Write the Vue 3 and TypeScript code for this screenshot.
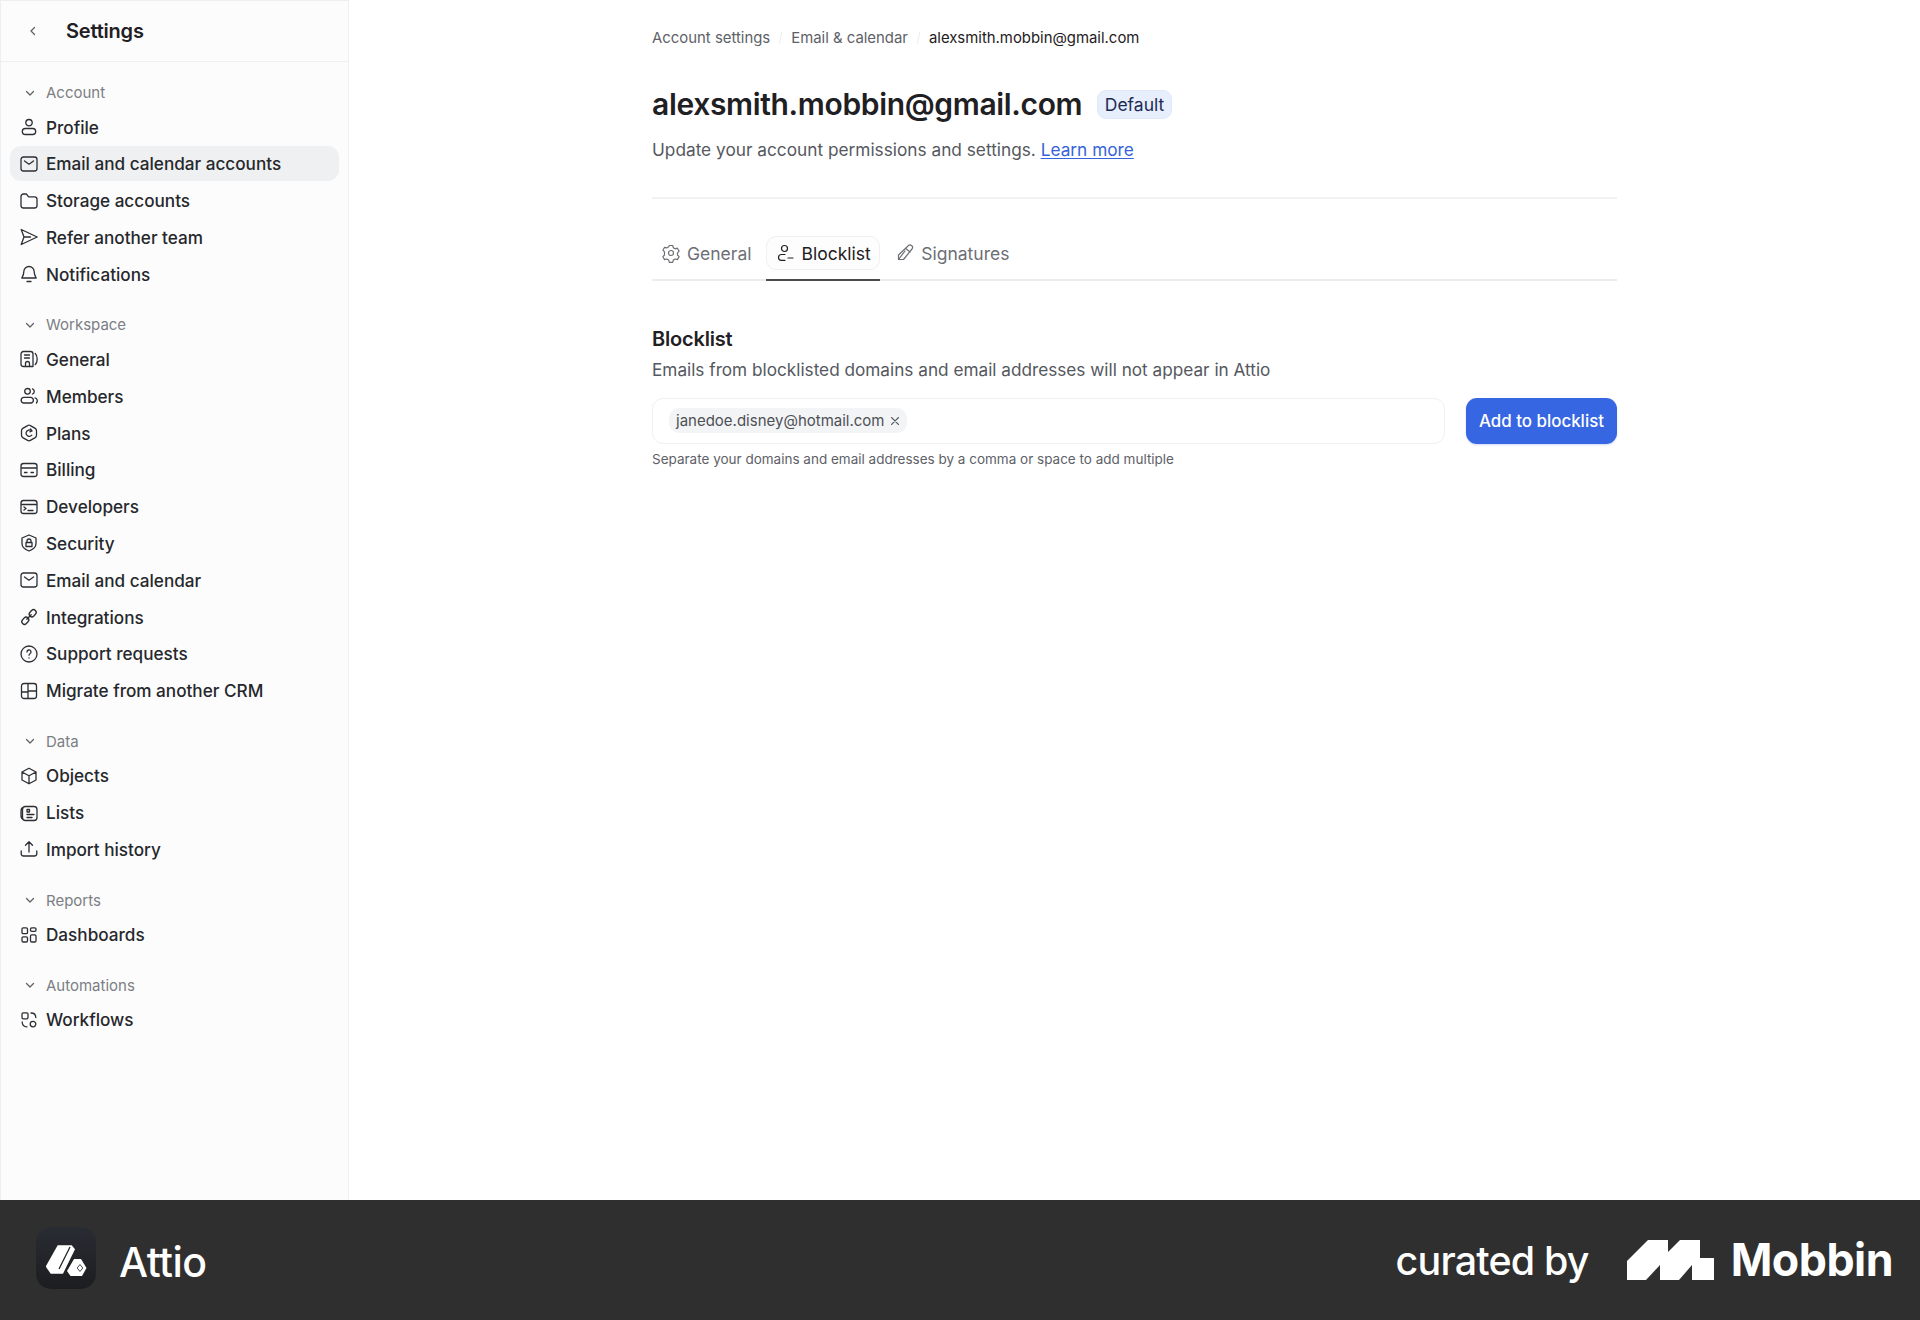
<script setup lang="ts">
interface NavItem {
  label: string;
  icon: string;
  active?: boolean;
}

interface NavSection {
  title: string;
  items: NavItem[];
}

// stroke paths on a 20x20 box
const icons: Record<string, string> = {
  user: 'M10 2.5a3.2 3.2 0 1 1 0 6.4 3.2 3.2 0 0 1 0-6.4ZM6.3 11.5h7.4a2.9 2.9 0 0 1 0 6H6.3a2.9 2.9 0 0 1 0-6Z',
  mail: 'M4.5 3h11A2.5 2.5 0 0 1 18 5.5v9a2.5 2.5 0 0 1-2.5 2.5h-11A2.5 2.5 0 0 1 2 14.5v-9A2.5 2.5 0 0 1 4.5 3ZM5.5 7l4.5 3.2L14.5 7',
  folder: 'M2 5.5A2.5 2.5 0 0 1 4.5 3h2.8l2.4 2.8h5.8A2.5 2.5 0 0 1 18 8.3v6.2a2.5 2.5 0 0 1-2.5 2.5h-11A2.5 2.5 0 0 1 2 14.5Z',
  send: 'M2.2 2.5 18.2 10 2.2 17.5 5 10ZM5 10h6.5',
  bell: 'M10 2.5a5.2 5.2 0 0 1 5.2 5.2c0 3.3 1.3 4.8 2 6.3H2.8c.7-1.5 2-3 2-6.3A5.2 5.2 0 0 1 10 2.5ZM8 17.5h4',
  general: 'M4.5 2.5h7A2.5 2.5 0 0 1 14 5v12.5H4.5A2.5 2.5 0 0 1 2 15V5a2.5 2.5 0 0 1 2.5-2.5ZM5.5 6h5M5.5 9h5M6.5 17.5v-3a2 2 0 0 1 4 0v3M16.2 4.5c1.5 1.2 2 3.4 2 5.5s-.5 4.3-2 5.5',
  users: 'M8.5 2.5a2.8 2.8 0 1 1 0 5.6 2.8 2.8 0 0 1 0-5.6ZM4.5 11.3H12a2.9 2.9 0 0 1 0 5.7H4.5a2.9 2.9 0 0 1 0-5.7ZM13.5 2.8a2.8 2.8 0 0 1 0 5.2M16 11.8c2.4.6 3 3.3 1.5 5.2',
  plans: 'M10 2.2c.5 0 1 .1 1.4.4l4.8 2.8c.8.5 1.3 1.3 1.3 2.3v4.6c0 1-.5 1.8-1.3 2.3l-4.8 2.8c-.9.5-1.9.5-2.8 0l-4.8-2.8c-.8-.5-1.3-1.3-1.3-2.3V7.7c0-1 .5-1.8 1.3-2.3l4.8-2.8c.4-.3.9-.4 1.4-.4ZM13 8A3.5 3.5 0 0 0 7 10a3.3 3.3 0 0 0 5.8 2.2M11.5 6l1.5 2-2.2.8',
  card: 'M4.5 3.5h11A2.5 2.5 0 0 1 18 6v8a2.5 2.5 0 0 1-2.5 2.5h-11A2.5 2.5 0 0 1 2 14V6a2.5 2.5 0 0 1 2.5-2.5ZM2 8h16M5.5 12.5H8M12 12.5h2.5',
  dev: 'M4.5 3.5h11A2.5 2.5 0 0 1 18 6v8a2.5 2.5 0 0 1-2.5 2.5h-11A2.5 2.5 0 0 1 2 14V6a2.5 2.5 0 0 1 2.5-2.5ZM2 7.5h16M5 10l2 1.5L5 13M9 13.5h5',
  shield: 'M10 2l7 3v5.5c0 3.5-3 6-7 7.5-4-1.5-7-4-7-7.5V5ZM7 9.5h6v4H7ZM8 9.5V8a2 2 0 0 1 4 0v1.5',
  link: 'M11 5.2l1.6-1.7a2.7 2.7 0 0 1 3.8 0 2.7 2.7 0 0 1 0 3.8L14.8 9A2.7 2.7 0 0 1 11 9a2.7 2.7 0 0 1 0-3.8ZM3.6 12.7 5.2 11A2.7 2.7 0 0 1 9 11a2.7 2.7 0 0 1 0 3.8l-1.6 1.7a2.7 2.7 0 0 1-3.8 0 2.7 2.7 0 0 1 0-3.8ZM7.8 12.2l4.4-4.4',
  help: 'M10 2a8 8 0 1 1 0 16 8 8 0 0 1 0-16ZM8 8a2 2 0 1 1 3 1.7c-.7.4-1 .8-1 1.5M10 13.8v.2',
  grid: 'M5 2.5h10A2.5 2.5 0 0 1 17.5 5v10a2.5 2.5 0 0 1-2.5 2.5H5A2.5 2.5 0 0 1 2.5 15V5A2.5 2.5 0 0 1 5 2.5ZM9 2.5v15M9 10h8.5M2.5 11H9',
  cube: 'M10 2.2l7 3.8v8l-7 3.8L3 14V6ZM3 6l7 3.8L17 6M10 9.8v8',
  lists: 'M6.5 3.5H15a3 3 0 0 1 3 3v8a3 3 0 0 1-3 3H6.5a3 3 0 0 1-3-3v-8a3 3 0 0 1 3-3ZM5.5 3.8C3.2 4 2 5.5 2 8v4.5c0 2 .8 3.5 2.5 4.3M8 6.5h2.5V9H8ZM8 11.5h7M8 14.5h5',
  upload: 'M10 13V2.8M6.5 6.3 10 2.8l3.5 3.5M2.2 12v2.5A2.5 2.5 0 0 0 4.7 17h10.6a2.5 2.5 0 0 0 2.5-2.5V12',
  dashboards: 'M4.3 2.8h2.9a1.3 1.3 0 0 1 1.3 1.3v3.3a1.3 1.3 0 0 1-1.3 1.3H4.3A1.3 1.3 0 0 1 3 7.4V4.1a1.3 1.3 0 0 1 1.3-1.3ZM12.8 2.8h2.9A1.3 1.3 0 0 1 17 4.1v1a1.3 1.3 0 0 1-1.3 1.3h-2.9a1.3 1.3 0 0 1-1.3-1.3v-1a1.3 1.3 0 0 1 1.3-1.3ZM12.8 9.8h2.9a1.3 1.3 0 0 1 1.3 1.3v4.6a1.3 1.3 0 0 1-1.3 1.3h-2.9a1.3 1.3 0 0 1-1.3-1.3v-4.6a1.3 1.3 0 0 1 1.3-1.3ZM4.3 11.8h2.9a1.3 1.3 0 0 1 1.3 1.3v2.6A1.3 1.3 0 0 1 7.2 17H4.3A1.3 1.3 0 0 1 3 15.7v-2.6a1.3 1.3 0 0 1 1.3-1.3Z',
  workflows: 'M4.3 2.8h3.4A1.3 1.3 0 0 1 9 4.1v3.4a1.3 1.3 0 0 1-1.3 1.3H4.3A1.3 1.3 0 0 1 3 7.5V4.1a1.3 1.3 0 0 1 1.3-1.3ZM12 3c3 0 4.8 1.5 4.8 4.5M3.2 12c0 3 1.5 4.8 4.8 4.8M14 11.3a2.8 2.8 0 1 1 0 5.6 2.8 2.8 0 0 1 0-5.6Z',
  gear: 'M8.3 2.5h3.4l.6 2.2 1.9 1.1 2.2-.6 1.7 2.9-1.6 1.7v2.2l1.6 1.7-1.7 2.9-2.2-.6-1.9 1.1-.6 2.2H8.3l-.6-2.2-1.9-1.1-2.2.6-1.7-2.9 1.6-1.7V8.9L1.9 7.2l1.7-2.9 2.2.6 1.9-1.1ZM10 7.5a2.5 2.5 0 1 1 0 5 2.5 2.5 0 0 1 0-5Z',
  block: 'M9.5 2.5a3 3 0 1 1 0 6 3 3 0 0 1 0-6ZM10 11.5H6.5a3 3 0 0 0-3 3c0 1.5 1 2.8 2.8 2.8H10M13 15h5',
  pen: 'M13 3a2.5 2.5 0 0 1 4 3l-8.500 10.500h-5V12ZM10.800 5.500 15 9M3.500 16.500 10 8',
};

const sections: NavSection[] = [
  {
    title: 'Account',
    items: [
      { label: 'Profile', icon: 'user' },
      { label: 'Email and calendar accounts', icon: 'mail', active: true },
      { label: 'Storage accounts', icon: 'folder' },
      { label: 'Refer another team', icon: 'send' },
      { label: 'Notifications', icon: 'bell' },
    ],
  },
  {
    title: 'Workspace',
    items: [
      { label: 'General', icon: 'general' },
      { label: 'Members', icon: 'users' },
      { label: 'Plans', icon: 'plans' },
      { label: 'Billing', icon: 'card' },
      { label: 'Developers', icon: 'dev' },
      { label: 'Security', icon: 'shield' },
      { label: 'Email and calendar', icon: 'mail' },
      { label: 'Integrations', icon: 'link' },
      { label: 'Support requests', icon: 'help' },
      { label: 'Migrate from another CRM', icon: 'grid' },
    ],
  },
  {
    title: 'Data',
    items: [
      { label: 'Objects', icon: 'cube' },
      { label: 'Lists', icon: 'lists' },
      { label: 'Import history', icon: 'upload' },
    ],
  },
  {
    title: 'Reports',
    items: [{ label: 'Dashboards', icon: 'dashboards' }],
  },
  {
    title: 'Automations',
    items: [{ label: 'Workflows', icon: 'workflows' }],
  },
];

const tabs = [
  { label: 'General', icon: 'gear' },
  { label: 'Blocklist', icon: 'block', active: true },
  { label: 'Signatures', icon: 'pen' },
];
</script>

<template>
  <div class="page">
    <div class="shell">
      <aside class="sidebar">
        <header class="side-head">
          <svg class="back" viewBox="0 0 12 12" width="12" height="12">
            <path d="M7.5 2.5 4 6l3.5 3.5" />
          </svg>
          <span class="side-title">Settings</span>
        </header>
        <nav class="nav">
          <section v-for="section in sections" :key="section.title" class="nav-section">
            <div class="section-title">
              <svg class="caret" viewBox="0 0 12 12" width="12" height="12">
                <path d="M2.5 4.5 6 8l3.5-3.5" />
              </svg>
              <span>{{ section.title }}</span>
            </div>
            <a
              v-for="item in section.items"
              :key="item.label"
              class="nav-item"
              :class="{ active: item.active }"
            >
              <svg class="nav-icon" viewBox="0 0 20 20" width="20" height="20">
                <path :d="icons[item.icon]" />
              </svg>
              <span>{{ item.label }}</span>
            </a>
          </section>
        </nav>
      </aside>

      <main class="main">
        <div class="content">
          <div class="crumbs">
            <span>Account settings</span>
            <i class="slash"></i>
            <span>Email &amp; calendar</span>
            <i class="slash"></i>
            <span class="current">alexsmith.mobbin@gmail.com</span>
          </div>

          <div class="title-row">
            <h1>alexsmith.mobbin@gmail.com</h1>
            <span class="badge">Default</span>
          </div>
          <p class="lead">
            Update your account permissions and settings.
            <a class="learn">Learn more</a>
          </p>
          <hr class="rule" />

          <div class="tabs">
            <div v-for="tab in tabs" :key="tab.label" class="tab" :class="{ active: tab.active }">
              <span class="tab-inner">
                <svg class="tab-icon" viewBox="0 0 20 20" width="20" height="20">
                  <path :d="icons[tab.icon]" />
                </svg>
                {{ tab.label }}
              </span>
            </div>
          </div>

          <h2>Blocklist</h2>
          <p class="desc">Emails from blocklisted domains and email addresses will not appear in Attio</p>
          <div class="form-row">
            <div class="field">
              <span class="chip">
                janedoe.disney@hotmail.com
                <svg viewBox="0 0 10 10" width="10" height="10">
                  <path d="M1.5 1.5l7 7M8.5 1.5l-7 7" />
                </svg>
              </span>
            </div>
            <button class="add" type="button">Add to blocklist</button>
          </div>
          <p class="hint">Separate your domains and email addresses by a comma or space to add multiple</p>
        </div>
      </main>
    </div>

    <footer class="footer">
      <div class="brand">
        <div class="app-icon">
          <svg viewBox="0 0 60 62" width="60" height="62">
            <path d="M10 39 21.7 18.3h14l3.300 4L27 46.700H14.700L10 40Z" fill="#fff" />
            <path d="M34 20 23 42" stroke="#1f2023" stroke-width="1.3" fill="none" />
            <path d="M31 44 38 32h7l5.500 9-4.500 8H34.500Z" fill="#fff" />
            <path d="M44 37.500l2.800 3.500-2.800 3.500-2.800-3.500Z" fill="none" stroke="#1f2023" stroke-width="0.8" />
          </svg>
        </div>
        <span class="app-name">Attio</span>
      </div>
      <div class="curated">
        <span class="curated-by">curated by</span>
        <svg class="mobbin-mark" viewBox="0 0 87 40" width="87" height="40">
          <path d="M0 40V21L21 0H41V12L53 0H73V18H87V40H65V25L52 40H33V25L19 40Z" fill="#fff" />
        </svg>
        <span class="mobbin">Mobbin</span>
      </div>
    </footer>
  </div>
</template>

<style>
html,
body {
  margin: 0;
  background: #fff;
}
</style>

<style scoped>
.page {
  width: 1920px;
  height: 1320px;
  display: flex;
  flex-direction: column;
  font-family: Inter, 'Liberation Sans', sans-serif;
  color: #1f2023;
}

.shell {
  flex: 1;
  display: flex;
  min-height: 0;
}

.sidebar {
  width: 349px;
  box-sizing: border-box;
  background: #fcfcfc;
  border-right: 1px solid #f0f1f2;
  border-left: 1px solid #eeeff0;
  border-top: 1px solid #eeeff0;
}

.side-head {
  height: 61px;
  box-sizing: border-box;
  display: flex;
  align-items: center;
  padding-left: 26px;
  gap: 27px;
  border-bottom: 1px solid #eff0f1;
}

.back,
.caret {
  fill: none;
  stroke: #5f6268;
  stroke-width: 1.3;
  stroke-linecap: round;
  stroke-linejoin: round;
}

.side-title {
  font-size: 20px;
  font-weight: 600;
  letter-spacing: -0.2px;
}

.nav {
  padding: 15.4px 9px 0;
}

.nav-section {
  display: flex;
  flex-direction: column;
  gap: 1.8px;
  margin-bottom: 18px;
}

.section-title {
  height: 30.4px;
  display: flex;
  align-items: center;
  gap: 10px;
  padding-left: 14px;
  font-size: 15px;
  color: #7b7e84;
}

.nav-item {
  height: 35px;
  display: flex;
  align-items: center;
  gap: 7px;
  padding-left: 9px;
  border-radius: 11px;
  font-size: 17.15px;
  font-weight: 450;
  color: #26282c;
}

.nav-item.active {
  background: #eff0f2;
}

.nav-icon {
  flex: none;
  fill: none;
  stroke: #2c2e33;
  stroke-width: 1.3;
  stroke-linecap: round;
  stroke-linejoin: round;
}

.main {
  flex: 1;
  display: flex;
  justify-content: center;
  min-width: 0;
}

.content {
  width: 965px;
  padding-top: 27px;
}

.crumbs {
  height: 22px;
  display: flex;
  align-items: center;
  gap: 10px;
  font-size: 14.9px;
  color: #5e6167;
}

.slash {
  width: 1px;
  height: 12px;
  background: #eceded;
  transform: rotate(12deg);
}

.current {
  color: #1f2023;
}

.title-row {
  display: flex;
  align-items: center;
  gap: 15px;
  margin-top: 30px;
}

h1 {
  margin: 0;
  font-size: 30px;
  line-height: 50px;
  font-weight: 600;
  letter-spacing: -0.34px;
}

.badge {
  height: 27px;
  padding: 0 6.5px;
  display: flex;
  align-items: center;
  font-size: 17.5px;
  color: #1c2a55;
  background: #e8effc;
  border: 1px solid #dfe7f8;
  border-radius: 9px;
}

.lead {
  margin: 8px 0 0;
  font-size: 17.25px;
  line-height: 26px;
  color: #55585e;
}

.learn {
  color: #3563d9;
  text-decoration: underline;
  text-underline-offset: 2px;
}

.rule {
  margin: 34px 0 0;
  border: 0;
  height: 2px;
  background: #f1f2f3;
}

.tabs {
  margin-top: 37px;
  display: flex;
  border-bottom: 2px solid #eceded;
}

.tab {
  padding-bottom: 9px;
  margin-bottom: -2px;
  border-bottom: 2px solid transparent;
  color: #6c6f75;
  font-size: 17.5px;
}

.tab:first-child {
  margin-right: 6px;
}

.tab:last-child {
  margin-left: 6.5px;
}

.tab.active {
  color: #1f2023;
  border-bottom-color: #4a4c50;
}

.tab-inner {
  height: 34px;
  box-sizing: border-box;
  padding: 0 8px;
  display: flex;
  align-items: center;
  gap: 6px;
  border: 1px solid transparent;
  border-radius: 10px;
}

.tab.active .tab-inner {
  border-color: #eff0f1;
  background: #fdfdfd;
}

.tab-icon {
  flex: none;
  fill: none;
  stroke: currentColor;
  stroke-width: 1.2;
  stroke-linecap: round;
  stroke-linejoin: round;
}

h2 {
  margin: 43.5px 0 0;
  font-size: 20px;
  line-height: 28px;
  font-weight: 600;
  letter-spacing: -0.2px;
}

.desc {
  margin: 4px 0 0;
  font-size: 17.2px;
  line-height: 25px;
  color: #55585e;
}

.form-row {
  margin-top: 16px;
  display: flex;
  gap: 21px;
}

.field {
  flex: 1;
  height: 46px;
  box-sizing: border-box;
  padding: 0 15px 0 16px;
  display: flex;
  align-items: center;
  border: 1px solid #eff0f1;
  border-radius: 11px;
}

.chip {
  height: 25px;
  padding: 0 7px;
  display: flex;
  align-items: center;
  gap: 5px;
  background: #f3f4f5;
  border-radius: 10px;
  font-size: 15px;
  color: #4d5055;
}

.chip svg {
  fill: none;
  stroke: #5c5f64;
  stroke-width: 1.1;
  stroke-linecap: round;
}

.add {
  width: 151px;
  height: 46px;
  padding: 0;
  border: 0;
  border-radius: 11px;
  background: #3766e3;
  color: #fff;
  font: 500 16.9px Inter, 'Liberation Sans', sans-serif;
  box-shadow: 0 1px 2px rgba(55, 102, 227, 0.25);
}

.hint {
  margin: 5px 0 0;
  font-size: 13.5px;
  line-height: 20px;
  color: #5e6167;
}

.footer {
  height: 120px;
  flex: none;
  display: flex;
  align-items: center;
  justify-content: space-between;
  padding: 0 27px 0 36px;
  background: #2f2f2f;
  color: #fff;
}

.brand {
  display: flex;
  align-items: center;
  gap: 23px;
}

.app-icon {
  width: 60px;
  height: 62px;
  margin-bottom: 5px;
  border-radius: 15px;
  background: linear-gradient(180deg, #292c33 0%, #1c1d20 100%);
}

.app-icon svg {
  display: block;
}

.app-name {
  font-size: 41px;
  font-weight: 500;
  letter-spacing: -0.5px;
  padding-top: 4px;
}

.curated {
  display: flex;
  align-items: center;
}

.curated-by {
  font-size: 39.4px;
  font-weight: 500;
  letter-spacing: -0.8px;
  margin-right: 38px;
  padding-top: 2px;
}

.mobbin-mark {
  margin-right: 17px;
}

.mobbin {
  font-size: 44.7px;
  font-weight: 700;
  letter-spacing: -0.5px;
}
</style>
